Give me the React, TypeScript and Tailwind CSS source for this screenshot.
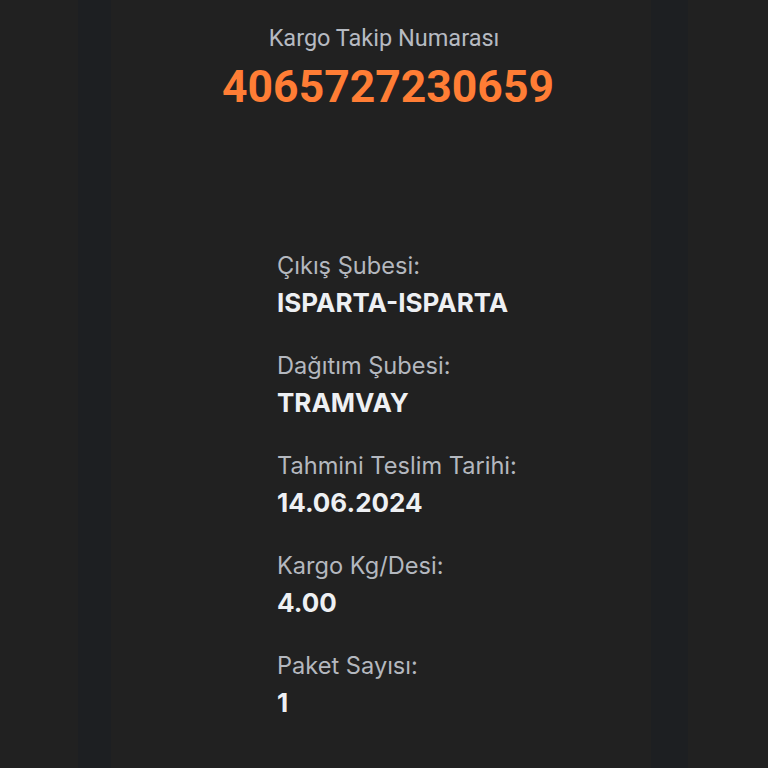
const rows = [
  { label: "Çıkış Şubesi:", value: "ISPARTA-ISPARTA" },
  { label: "Dağıtım Şubesi:", value: "TRAMVAY" },
  { label: "Tahmini Teslim Tarihi:", value: "14.06.2024" },
  { label: "Kargo Kg/Desi:", value: "4.00" },
  { label: "Paket Sayısı:", value: "1" },
];

export default function App() {
  return (
    <div className="relative h-[768px] w-[768px] overflow-hidden bg-[#212121]">
      {/* faint vertical bands in the backdrop */}
      <div className="absolute inset-0 flex">
        <div className="w-[78px]" />
        <div className="w-[33px] bg-[#1d1f22]" />
        <div className="w-[540px]" />
        <div className="w-[37px] bg-[#1d1f22]" />
      </div>

      <div className="relative flex flex-col">
        <div className="flex flex-col items-center pt-[23px]" style={{ fontFamily: "Roboto, sans-serif" }}>
          <p className="text-[23.5px] leading-[30px] text-[#b6bac1]">Kargo Takip Numarası</p>
          <p className="mt-[9px] pl-[8px] text-[44.5px] font-bold leading-[50px] text-[#ff7d35]">
            4065727230659
          </p>
        </div>

        <div className="mt-[140px] flex flex-col gap-[33px] pl-[277px]" style={{ fontFamily: "Inter, sans-serif" }}>
          {rows.map((r) => (
            <div key={r.label} className="flex flex-col gap-[7px]">
              <p className="text-[23.6px] leading-[28px] text-[#b4b8bf]">{r.label}</p>
              <p className="text-[26px] font-bold leading-[32px] text-[#eef0f3]">{r.value}</p>
            </div>
          ))}
        </div>
      </div>
    </div>
  );
}
